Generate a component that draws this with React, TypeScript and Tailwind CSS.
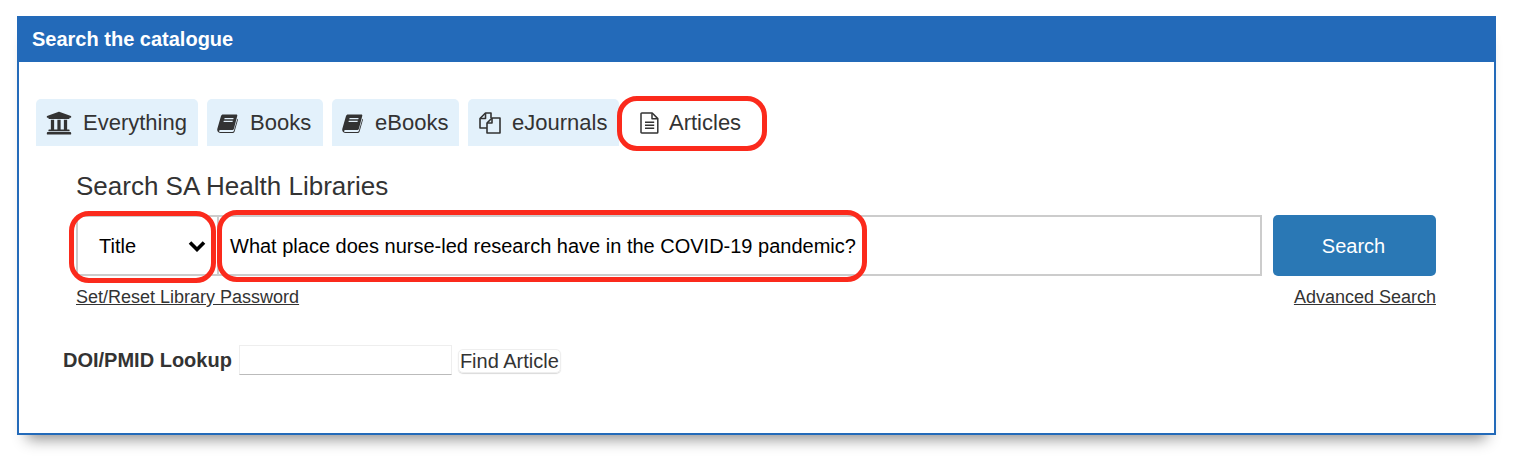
import React from "react";
import { FaUniversity } from "react-icons/fa";

const BookIcon = () => (
  <svg width="21" height="20" viewBox="0 0 21 20" className="shrink-0">
    <path d="M6 1.5h13.3c.8 0 1.2.6 1 1.3L17 15.6c-.3 1-1 1.5-2 1.5H3.2c-.9 0-1.3.8-1 1.3.2.4.7.6 1.3.6h11.7c.8 0 1.4-.4 1.7-1.2l3.5-12 .6.6-3.4 12c-.4 1.1-1.4 1.6-2.5 1.6H3.5c-1.5 0-2.9-1-3.2-2.4-.2-.8-.1-1.4.1-2.1L4 3c.3-.9 1-1.5 2-1.5z" fill="#333" />
    <path d="M7.6 5h9l-.3 1.2h-9zM6.8 7.7h9l-.3 1.2h-9z" fill="#e3f1fb" />
  </svg>
);

const CopyIcon = () => (
  <svg width="22" height="22" viewBox="0 0 22 22" fill="none" stroke="#333" strokeWidth="1.6" strokeLinejoin="round" className="shrink-0">
    <path d="M8 16H1V6.5L6.5 1H12v5" />
    <path d="M6.5 1v5.5H1" />
    <path d="M8 11l5-5h8v15H8z" />
    <path d="M13 6v5H8" />
  </svg>
);

const FileIcon = () => (
  <svg width="19" height="22" viewBox="0 0 19 22" fill="none" stroke="#333" strokeWidth="1.5" strokeLinejoin="round" className="shrink-0">
    <path d="M1.8 1h10.4l5.6 5.6v13.6c0 .5-.3.8-.8.8H1.8c-.5 0-.8-.3-.8-.8V1.8c0-.5.3-.8.8-.8z" />
    <path d="M12 1.2v5.6h5.6" />
    <path d="M5 10.2h9.2M5 13.2h9.2M5 16.2h9.2" />
  </svg>
);

const Chevron = () => (
  <svg width="18" height="12" viewBox="0 0 18 12" fill="none" stroke="#000" strokeWidth="3.6" className="shrink-0">
    <path d="M2 2.5l7 7 7-7" />
  </svg>
);

function Tab({ icon, label, w, pl, gap, active }: { icon: React.ReactNode; label: string; w: string; pl: string; gap: string; active?: boolean }) {
  return (
    <div className={`${w} ${pl} ${gap} h-[47px] rounded-t-[5px] flex items-center text-[22px] text-[#333] ${active ? "bg-white" : "bg-[#e3f1fb]"}`}>
      {icon}
      <span>{label}</span>
    </div>
  );
}

export default function App() {
  return (
    <div className="relative w-[1522px] h-[460px] bg-white pt-[16px] pl-[17px] overflow-hidden [font-family:'Liberation_Sans',Arial,sans-serif] text-[#333]">
      <section className="w-[1479px] h-[419px] border-2 border-[#236ab9] bg-white shadow-[0_14px_14px_-10px_rgba(0,0,0,0.45)]">
        <header className="h-[45px] bg-[#236ab9] text-white font-bold text-[20px] pl-[13px] pb-[2px] flex items-center -mt-px">
          Search the catalogue
        </header>
        <div className="pt-[37px] pl-[17px]">
          <nav className="flex gap-[9px]">
            <Tab w="w-[162px]" pl="pl-[10px]" gap="gap-[11px]" label="Everything" icon={<FaUniversity className="text-[26px] shrink-0 text-[#333]" />} />
            <Tab w="w-[116px]" pl="pl-[10px]" gap="gap-[12px]" label="Books" icon={<BookIcon />} />
            <Tab w="w-[127px]" pl="pl-[10px]" gap="gap-[12px]" label="eBooks" icon={<BookIcon />} />
            <Tab w="w-[151px]" pl="pl-[11px]" gap="gap-[11px]" label="eJournals" icon={<CopyIcon />} />
            <div className="-ml-[9px]">
              <Tab w="w-[148px]" pl="pl-[21px]" gap="gap-[10px]" active label="Articles" icon={<FileIcon />} />
            </div>
          </nav>
          <div className="pl-[40px] pr-[17px] w-[1417px]">
            <h2 className="text-[26px] leading-[30px] mt-[25px] text-[#333]">Search SA Health Libraries</h2>
            <form className="flex mt-[14px] h-[61px]">
              <div className="w-[141px] h-full border-2 border-[#ccc] border-r-0 flex items-center justify-between pl-[21px] pr-[11px] text-[20px] text-black">
                <span>Title</span>
                <Chevron />
              </div>
              <div className="flex-1 h-full border-2 border-[#ccc] flex items-center pl-[11px] text-[20px] text-black">
                What place does nurse-led research have in the COVID-19 pandemic?
              </div>
              <button type="button" className="ml-[11px] w-[163px] h-full rounded-[5px] bg-[#2a78b5] text-white text-[20px] pr-[2px]">
                Search
              </button>
            </form>
            <div className="flex justify-between mt-[11px] text-[18px] leading-[20px] text-[#333]">
              <a className="underline">Set/Reset Library Password</a>
              <a className="underline">Advanced Search</a>
            </div>
          </div>
          <div className="flex items-center ml-[27px] mt-[38px] h-[30px]">
            <span className="font-bold text-[20px] text-[#333]">DOI/PMID Lookup</span>
            <div className="ml-[7px] w-[213px] h-[30px] border border-[#eee] border-b-[#bbb] bg-white" />
            <button type="button" className="ml-[6px] mt-[2px] h-[24px] px-[1px] rounded-[5px] border border-[#eee] shadow-[0_1px_1px_rgba(0,0,0,0.15)] text-[20px] leading-[22px] text-[#333]">
              Find Article
            </button>
          </div>
        </div>
      </section>
      <div className="absolute left-[617px] top-[96px] w-[150px] h-[55px] rounded-[20px] border-[5px] border-[#fb2a1c]" />
      <div className="absolute left-[69px] top-[211px] w-[147px] h-[72px] rounded-[20px] border-[5px] border-[#fb2a1c]" />
      <div className="absolute left-[217px] top-[210px] w-[650px] h-[72px] rounded-[20px] border-[5px] border-[#fb2a1c]" />
    </div>
  );
}
